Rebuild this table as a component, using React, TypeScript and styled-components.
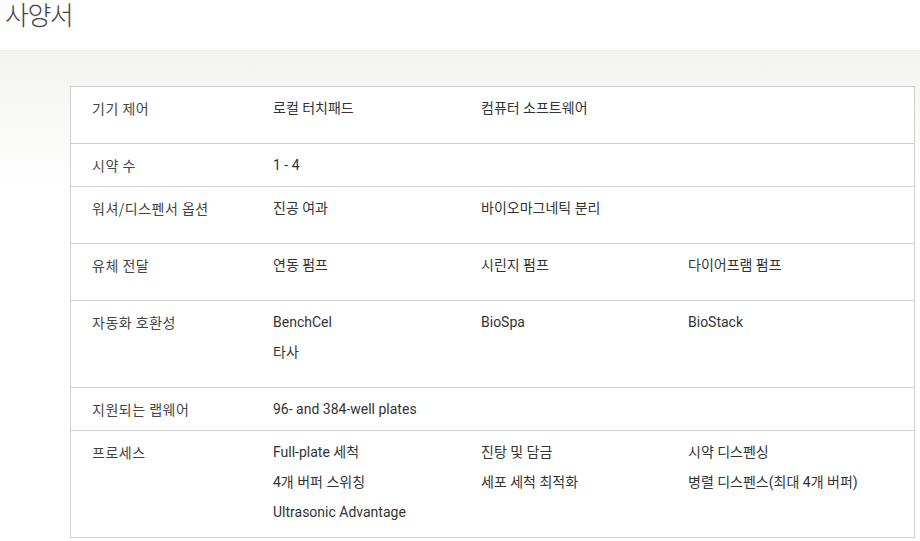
import React from 'react';
import styled, { createGlobalStyle } from 'styled-components';

const GlobalStyle = createGlobalStyle`
  html, body {
    margin: 0;
    padding: 0;
    background: #fff;
  }
  body {
    font-family: Roboto, "Noto Sans CJK KR", sans-serif;
    color: #333;
  }
`;

const Page = styled.div`
  width: 920px;
  min-height: 541px;
`;

const Title = styled.h1`
  margin: 0;
  height: 50px;
  padding: 0 0 0 5px;
  font-family: "Noto Sans CJK KR", sans-serif;
  font-weight: 300;
  font-size: 26px;
  line-height: 27px;
  letter-spacing: -1.5px;
  color: #444;
`;

const Band = styled.section`
  background: linear-gradient(to bottom, #f3f3f1 0px, #fafaf9 80px, #ffffff 140px);
  border-top: 1px solid #f0f0ee;
  padding: 35px 5px 0 70px;
`;

const Table = styled.div`
  background: #fff;
  border: 1px solid #d0d0d0;
`;

const Row = styled.div<{ $extra: number }>`
  display: grid;
  grid-template-columns: 181px 208px 207px 1fr;
  padding: 6px 0 ${(p) => p.$extra}px;
  font-size: 14px;
  line-height: 30px;
  & + & {
    border-top: 1px solid #d0d0d0;
  }
`;

const Cell = styled.div<{ $label?: boolean }>`
  padding-left: 21px;
  color: ${(p) => (p.$label ? '#444' : '#333')};
  letter-spacing: ${(p) => (p.$label ? '0.5px' : 'normal')};
  font-family: ${(p) => (p.$label ? '"Noto Sans CJK KR", sans-serif' : 'Roboto, "Noto Sans CJK KR", sans-serif')};
`;

const Line = styled.div`
  white-space: nowrap;
`;

type Spec = { label: string; cols: string[][]; extra: number };

const specs: Spec[] = [
  { label: '기기 제어', cols: [['로컬 터치패드'], ['컴퓨터 소프트웨어'], []], extra: 20 },
  { label: '시약 수', cols: [['1 - 4'], [], []], extra: 6 },
  { label: '워셔/디스펜서 옵션', cols: [['진공 여과'], ['바이오마그네틱 분리'], []], extra: 20 },
  { label: '유체 전달', cols: [['연동 펌프'], ['시린지 펌프'], ['다이어프램 펌프']], extra: 20 },
  { label: '자동화 호환성', cols: [['BenchCel', '타사'], ['BioSpa'], ['BioStack']], extra: 20 },
  { label: '지원되는 랩웨어', cols: [['96- and 384-well plates'], [], []], extra: 6 },
  {
    label: '프로세스',
    cols: [
      ['Full-plate 세척', '4개 버퍼 스위칭', 'Ultrasonic Advantage'],
      ['진탕 및 담금', '세포 세척 최적화'],
      ['시약 디스펜싱', '병렬 디스펜스(최대 4개 버퍼)'],
    ],
    extra: 10,
  },
];

export default function App() {
  return (
    <Page>
      <GlobalStyle />
      <Title>사양서</Title>
      <Band>
        <Table>
          {specs.map((s) => (
            <Row key={s.label} $extra={s.extra}>
              <Cell $label>{s.label}</Cell>
              {s.cols.map((col, i) => (
                <Cell key={i}>
                  {col.map((t) => (
                    <Line key={t}>{t}</Line>
                  ))}
                </Cell>
              ))}
            </Row>
          ))}
        </Table>
      </Band>
    </Page>
  );
}
